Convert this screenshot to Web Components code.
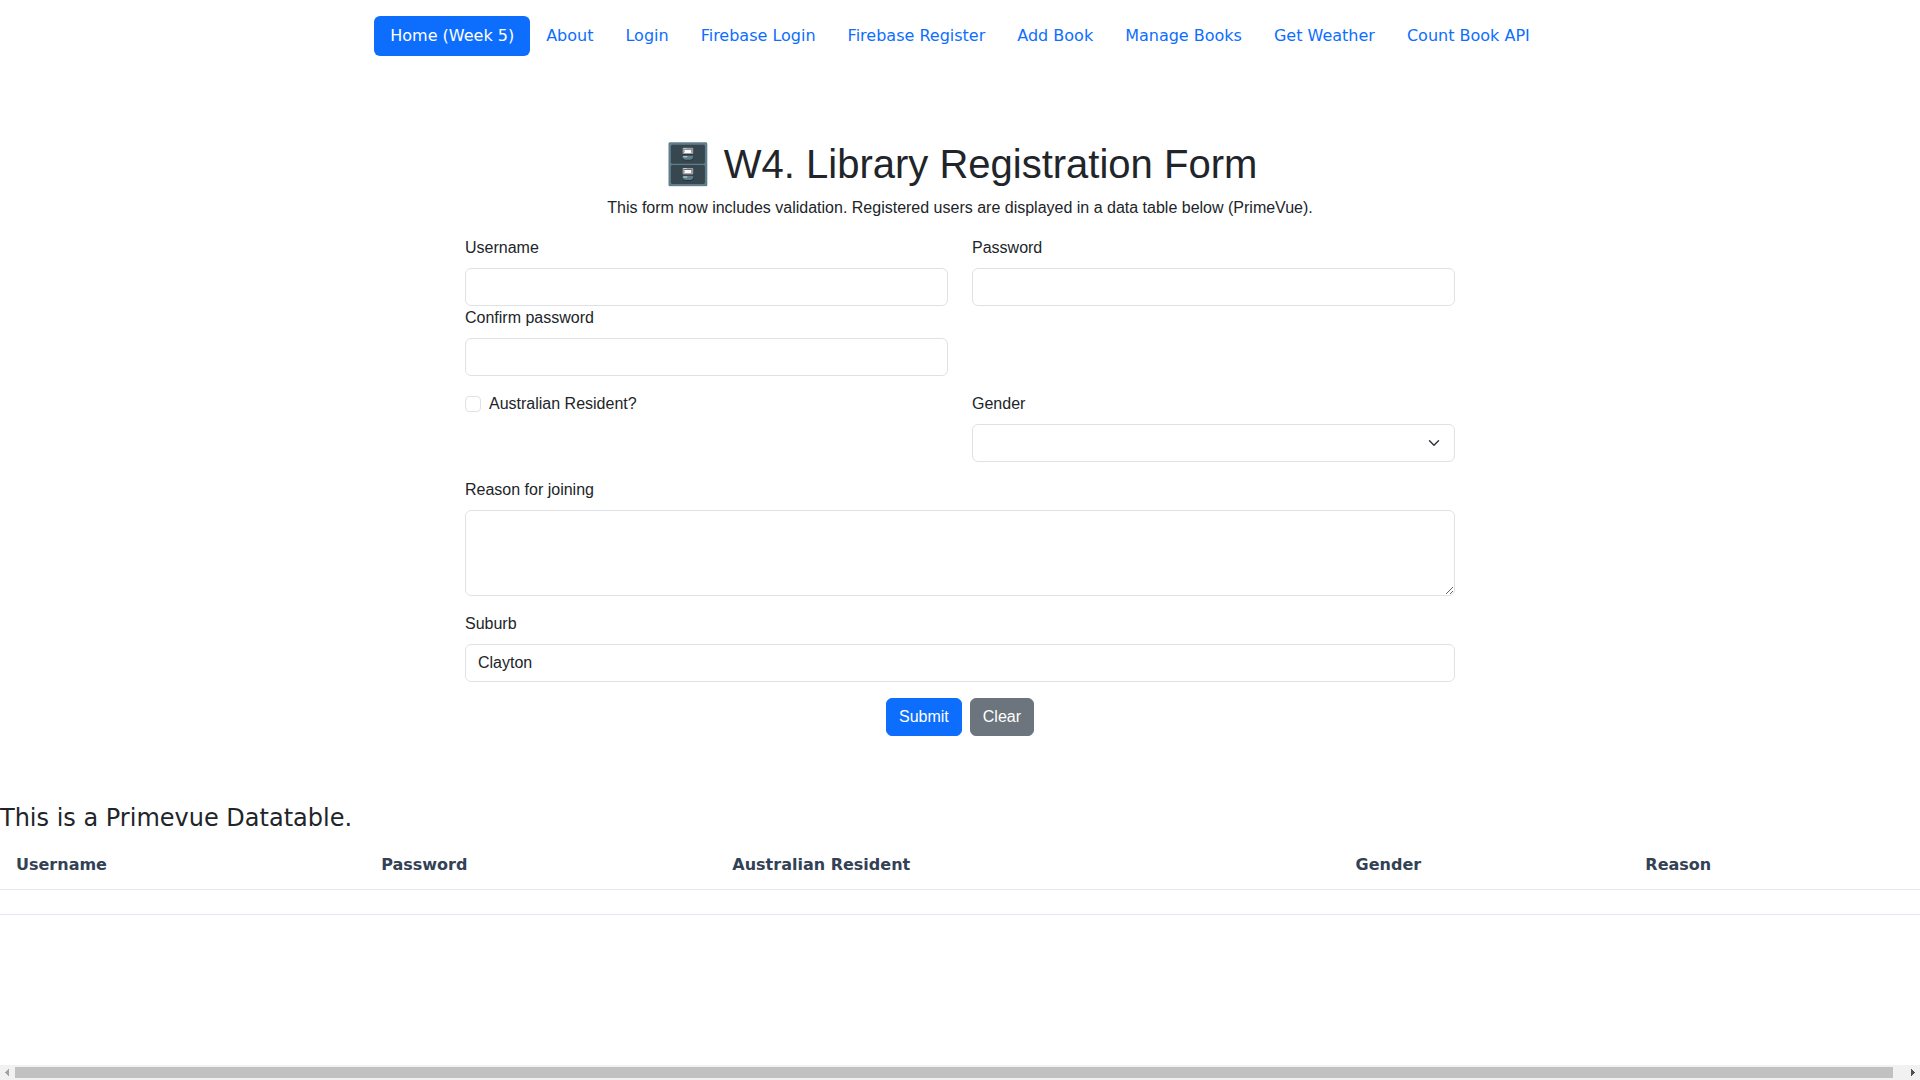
<!DOCTYPE html>
<html lang="en">
<head>
<meta charset="utf-8">
<meta name="viewport" content="width=device-width, initial-scale=1">
<title>Library Registration</title>
<style>
  body { margin: 0; background: #fff; color: #212529; font: 16px/24px "DejaVu Sans", sans-serif; }
</style>
</head>
<body>
<library-app></library-app>

<template id="app-template">
  <style>
    :host { display: flex; flex-direction: column; min-height: 100vh; }
    main { flex: 1; display: flex; flex-direction: column; gap: 68px; }
  </style>
  <nav-pills>
    <nav-pill active>Home (Week 5)</nav-pill>
    <nav-pill>About</nav-pill>
    <nav-pill>Login</nav-pill>
    <nav-pill>Firebase Login</nav-pill>
    <nav-pill>Firebase Register</nav-pill>
    <nav-pill>Add Book</nav-pill>
    <nav-pill>Manage Books</nav-pill>
    <nav-pill>Get Weather</nav-pill>
    <nav-pill>Count Book API</nav-pill>
  </nav-pills>
  <main>
    <registration-form></registration-form>
    <user-table></user-table>
  </main>
  <scroll-strip></scroll-strip>
</template>

<template id="nav-template">
  <style>
    :host { display: block; padding: 16px 0; margin-bottom: 68px; }
    nav { display: flex; flex-wrap: wrap; justify-content: center; }
  </style>
  <nav><slot></slot></nav>
</template>

<template id="pill-template">
  <style>
    :host { display: block; }
    a { display: block; padding: 8px 16px; border-radius: 6px; color: #0d6efd; text-decoration: none; }
    :host([active]) a { background: #0d6efd; color: #fff; }
  </style>
  <a href="#"><slot></slot></a>
</template>

<template id="field-template">
  <style>
    :host { display: block; min-width: 0; }
    * { box-sizing: border-box; }
    label { display: block; margin-bottom: 8px; }
    input, select, textarea {
      display: block; width: 100%; margin: 0; padding: 6px 12px;
      border: 1px solid #dee2e6; border-radius: 6px; background-color: #fff;
      color: inherit; font: inherit; appearance: none;
    }
    input, select { height: 38px; }
    textarea { resize: vertical; }
    select {
      background-image: url("data:image/svg+xml,%3Csvg xmlns='http://www.w3.org/2000/svg' viewBox='0 0 16 16'%3E%3Cpath fill='none' stroke='%23343a40' stroke-linecap='round' stroke-linejoin='round' stroke-width='2' d='m2 5 6 6 6-6'/%3E%3C/svg%3E");
      background-repeat: no-repeat; background-position: right 12px center; background-size: 16px 12px;
    }
  </style>
  <label for="control"></label>
</template>

<template id="check-template">
  <style>
    :host { display: block; }
    div { display: flex; align-items: center; gap: 8px; }
    input { appearance: none; box-sizing: border-box; width: 16px; height: 16px; margin: 0; border: 1px solid #dee2e6; border-radius: 4px; background: #fff; }
    input:checked { background: #0d6efd; border-color: #0d6efd; }
  </style>
  <div><input type="checkbox" id="control"><label for="control"><slot></slot></label></div>
</template>

<template id="form-template">
  <style>
    :host { display: block; width: 990px; max-width: 100%; margin: 0 auto; font-family: "Liberation Sans", sans-serif; }
    h1 { margin: 0 0 8px; font-size: 40px; line-height: 48px; font-weight: 500; text-align: center; }
    p { margin: 0 0 16px; text-align: center; }
    form { display: flex; flex-direction: column; gap: 16px; }
    .row { display: grid; grid-template-columns: 1fr 1fr; column-gap: 24px; }
    .actions { display: flex; justify-content: center; gap: 8px; }
    button { padding: 6px 12px; border: 1px solid #0d6efd; border-radius: 6px; background: #0d6efd; color: #fff; font: inherit; }
    button.secondary { background: #6c757d; border-color: #6c757d; }
  </style>
  <h1>🗄️ W4. Library Registration Form</h1>
  <p>This form now includes validation. Registered users are displayed in a data table below (PrimeVue).</p>
  <form>
    <div class="row">
      <form-field label="Username"></form-field>
      <form-field label="Password" kind="password"></form-field>
      <form-field label="Confirm password" kind="password"></form-field>
    </div>
    <div class="row">
      <check-field>Australian Resident?</check-field>
      <form-field label="Gender" kind="select"></form-field>
    </div>
    <form-field label="Reason for joining" kind="textarea"></form-field>
    <form-field label="Suburb" value="Clayton"></form-field>
    <div class="actions">
      <button type="button">Submit</button>
      <button type="reset" class="secondary">Clear</button>
    </div>
  </form>
</template>

<template id="table-template">
  <style>
    :host { display: block; overflow: hidden; }
    h4 { margin: 0 0 8px; font-size: 24px; line-height: 29px; font-weight: 500; }
    table { width: 100%; border-spacing: 0; }
    th { padding: 12px 16px; border-bottom: 1px solid #e2e8f0; color: #334155; font-weight: 700; text-align: left; }
    td { padding: 12px 16px; border-bottom: 1px solid #e2e8f0; }
  </style>
  <h4>This is a Primevue Datatable.</h4>
  <table>
    <thead><tr><th>Username</th><th>Password</th><th>Australian Resident</th><th>Gender</th><th>Reason</th></tr></thead>
    <tbody><tr><td colspan="5"></td></tr></tbody>
  </table>
</template>

<template id="scroll-template">
  <style>
    :host { display: flex; align-items: center; height: 15px; background: #f1f1f1; position: sticky; bottom: 0; }
    svg { display: block; width: 15px; height: 15px; flex: none; }
    .track { flex: 1; padding-right: 12px; }
    .thumb { height: 11px; background: #c1c1c1; }
  </style>
  <svg viewBox="0 0 15 15" shape-rendering="crispEdges"><path d="M9 4v7L5 7.500z" fill="#a3a3a3"/></svg>
  <div class="track"><div class="thumb"></div></div>
  <svg viewBox="0 0 15 15" shape-rendering="crispEdges"><path d="M6 4v7l4-3.500z" fill="#505050"/></svg>
</template>

<script>
  const define = (name, templateId, setup) => {
    customElements.define(name, class extends HTMLElement {
      constructor() {
        super();
        const root = this.attachShadow({ mode: "open" });
        root.append(document.getElementById(templateId).content.cloneNode(true));
      }
      connectedCallback() {
        if (setup && !this.ready) { this.ready = true; setup(this, this.shadowRoot); }
      }
    });
  };

  define("nav-pill", "pill-template");
  define("nav-pills", "nav-template");
  define("check-field", "check-template");
  define("form-field", "field-template", (host, root) => {
    root.querySelector("label").textContent = host.getAttribute("label");
    const kind = host.getAttribute("kind") || "text";
    const control = document.createElement(kind === "select" || kind === "textarea" ? kind : "input");
    control.id = "control";
    if (kind === "textarea") {
      control.rows = 3;
    } else if (kind === "select") {
      for (const name of ["Female", "Male", "Other"]) control.add(new Option(name, name.toLowerCase()));
      control.selectedIndex = -1;
    } else {
      control.type = kind;
      control.value = host.getAttribute("value") || "";
    }
    root.append(control);
  });
  define("registration-form", "form-template");
  define("user-table", "table-template");
  define("scroll-strip", "scroll-template");
  define("library-app", "app-template");
</script>
</body>
</html>
